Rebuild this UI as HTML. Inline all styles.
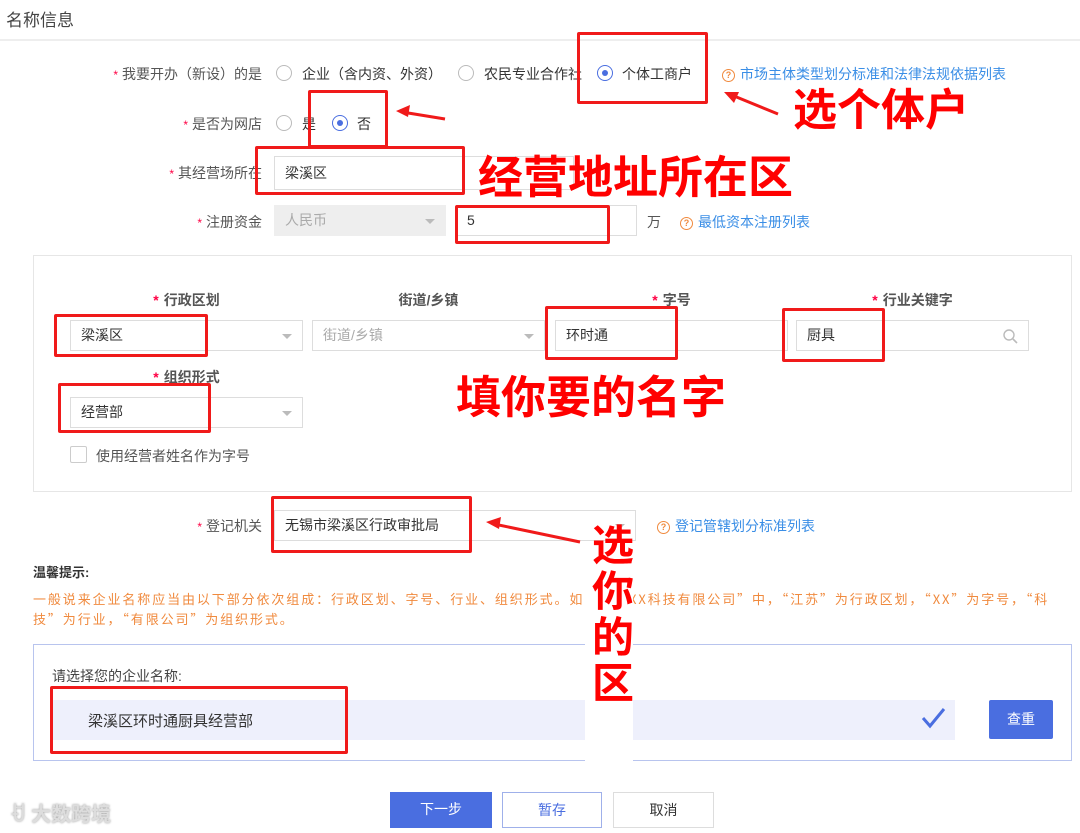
<!DOCTYPE html>
<html><head><meta charset="utf-8"><style>
*{box-sizing:border-box;margin:0;padding:0}
body{width:1080px;height:833px;background:#fff;position:relative;overflow:hidden;font-family:"Liberation Sans","Noto Sans CJK SC",sans-serif;color:#333;font-size:14px}
.a{position:absolute;white-space:nowrap}
.lbl{position:absolute;text-align:right;width:200px;color:#555}
.lbl i{color:#f04;font-style:normal;margin-right:4px;font-size:12px}
.rad{position:absolute;width:16px;height:16px;border:1px solid #bbb;border-radius:50%}
.rad.on{border-color:#4a6ee0}
.rad.on:after{content:"";position:absolute;left:4px;top:4px;width:6px;height:6px;border-radius:50%;background:#4a6ee0}
.inp{position:absolute;border:1px solid #ddd;background:#fff;height:31px;padding:0 10px;line-height:29px;color:#333}
.arr:after{content:"";position:absolute;right:10px;top:13px;border:5px solid transparent;border-top-color:#bbb}
.link{color:#3a8ee6}
.q{display:inline-block;width:13px;height:13px;border:1.5px solid #f08a3e;border-radius:50%;color:#f08a3e;font-size:9px;line-height:10px;text-align:center;margin-right:5px;vertical-align:1px;font-weight:bold}
.red{position:absolute;border:3px solid #f01a1a;border-radius:2px}
.big{position:absolute;color:#f00;font-weight:bold;font-family:"Noto Sans CJK SC",sans-serif;white-space:nowrap}
.hd{position:absolute;color:#555;font-weight:bold;font-size:14px;text-align:center;width:233px}
.hd i{color:#f04;font-style:normal;margin-right:5px}
.btn{position:absolute;height:36px;line-height:34px;text-align:center;font-size:14px}
</style></head><body>
<div class="a" style="left:6px;top:6px;font-size:17px;color:#444">名称信息</div>
<div class="a" style="left:0;top:39px;width:1080px;height:2px;background:#eee"></div>

<div class="lbl" style="left:62px;top:64px"><i>*</i>我要开办（新设）的是</div>
<div class="rad" style="left:276px;top:65px"></div><div class="a" style="left:302px;top:64px">企业（含内资、外资）</div>
<div class="rad" style="left:458px;top:65px"></div><div class="a" style="left:484px;top:64px">农民专业合作社</div>
<div class="rad on" style="left:597px;top:65px"></div><div class="a" style="left:622px;top:64px">个体工商户</div>
<div class="a link" style="left:722px;top:64px"><span class="q">?</span>市场主体类型划分标准和法律法规依据列表</div>

<div class="lbl" style="left:62px;top:114px"><i>*</i>是否为网店</div>
<div class="rad" style="left:276px;top:115px"></div><div class="a" style="left:302px;top:114px">是</div>
<div class="rad on" style="left:332px;top:115px"></div><div class="a" style="left:357px;top:114px">否</div>

<div class="lbl" style="left:62px;top:163px"><i>*</i>其经营场所在</div>
<div class="inp" style="left:274px;top:156px;width:300px;height:34px;line-height:32px">梁溪区</div>

<div class="lbl" style="left:62px;top:212px"><i>*</i>注册资金</div>
<div class="inp arr" style="left:274px;top:205px;width:172px;background:#eee;border-color:#eee;color:#aaa">人民币</div>
<div class="inp" style="left:456px;top:205px;width:181px">5</div>
<div class="a" style="left:647px;top:212px;color:#555">万</div>
<div class="a link" style="left:680px;top:212px"><span class="q">?</span>最低资本注册列表</div>

<div class="a" style="left:33px;top:255px;width:1039px;height:237px;border:1px solid #e6e6e6"></div>
<div class="hd" style="left:70px;top:290px"><i>*</i>行政区划</div>
<div class="hd" style="left:312px;top:290px">街道/乡镇</div>
<div class="hd" style="left:555px;top:290px"><i>*</i>字号</div>
<div class="hd" style="left:796px;top:290px"><i>*</i>行业关键字</div>
<div class="inp arr" style="left:70px;top:320px;width:233px">梁溪区</div>
<div class="inp arr" style="left:312px;top:320px;width:233px;color:#aaa">街道/乡镇</div>
<div class="inp" style="left:555px;top:320px;width:233px">环时通</div>
<div class="inp" style="left:796px;top:320px;width:233px">厨具<svg style="position:absolute;right:10px;top:8px" width="15" height="15" viewBox="0 0 15 15"><circle cx="6" cy="6" r="5" fill="none" stroke="#bbb" stroke-width="1.4"/><path d="M10 10l4 4" stroke="#bbb" stroke-width="1.6"/></svg></div>
<div class="hd" style="left:70px;top:367px"><i>*</i>组织形式</div>
<div class="inp arr" style="left:70px;top:397px;width:233px">经营部</div>
<div class="a" style="left:70px;top:446px;width:17px;height:17px;border:1px solid #ccc;border-radius:2px"></div>
<div class="a" style="left:96px;top:446px;color:#555">使用经营者姓名作为字号</div>

<div class="lbl" style="left:62px;top:516px"><i>*</i>登记机关</div>
<div class="inp arr" style="left:274px;top:510px;width:362px">无锡市梁溪区行政审批局</div>
<div class="a link" style="left:657px;top:516px"><span class="q">?</span>登记管辖划分标准列表</div>

<div class="a" style="left:33px;top:562px;font-weight:bold;font-size:13px;color:#333">温馨提示:</div>
<div class="a" style="left:33px;top:589px;width:1040px;white-space:nowrap;color:#f08a3e;font-size:13px;line-height:20px;font-family:'Noto Sans CJK SC',sans-serif;letter-spacing:1.9px">一般说来企业名称应当由以下部分依次组成：行政区划、字号、行业、组织形式。如“江苏XX科技有限公司”中，“江苏”为行政区划，“XX”为字号，“科<br>技”为行业，“有限公司”为组织形式。</div>

<div class="a" style="left:33px;top:644px;width:1039px;height:117px;border:1px solid #b8c4ee"></div>
<div class="a" style="left:52px;top:666px;color:#444">请选择您的企业名称:</div>
<div class="a" style="left:52px;top:700px;width:903px;height:40px;background:#eef0fc"></div>
<div class="a" style="left:88px;top:710px;font-size:15px">梁溪区环时通厨具经营部</div>
<svg class="a" style="left:920px;top:706px" width="26" height="24" viewBox="0 0 26 24"><path d="M3 12l7 8L24 3" fill="none" stroke="#4a6ee0" stroke-width="3"/></svg>
<div class="btn" style="left:989px;top:700px;width:64px;height:39px;line-height:39px;background:#4a6ee0;color:#fff;border-radius:2px">查重</div>

<div class="btn" style="left:390px;top:792px;width:102px;background:#4a6ee0;color:#fff">下一步</div>
<div class="btn" style="left:502px;top:792px;width:100px;border:1px solid #9fb0ea;color:#4a6ee0">暂存</div>
<div class="btn" style="left:613px;top:792px;width:101px;border:1px solid #ddd;color:#333">取消</div>
<div class="a" style="left:10px;top:798px;font-size:20px;color:#ddd;font-weight:bold;text-shadow:0 0 2px #999">ꀀ 大数跨境</div>

<div class="red" style="left:577px;top:32px;width:131px;height:72px"></div>
<div class="red" style="left:308px;top:90px;width:80px;height:58px"></div>
<div class="red" style="left:255px;top:146px;width:210px;height:49px"></div>
<div class="red" style="left:455px;top:205px;width:155px;height:39px"></div>
<div class="red" style="left:54px;top:314px;width:154px;height:43px"></div>
<div class="red" style="left:545px;top:306px;width:133px;height:54px"></div>
<div class="red" style="left:782px;top:308px;width:103px;height:54px"></div>
<div class="red" style="left:58px;top:383px;width:153px;height:50px"></div>
<div class="red" style="left:271px;top:496px;width:201px;height:57px"></div>
<div class="red" style="left:50px;top:686px;width:298px;height:68px"></div>

<svg class="a" style="left:0;top:0" width="1080" height="833">
<path d="M445 119L402 112" stroke="#f01a1a" stroke-width="3"/><path d="M396 111l14-6-2 12z" fill="#f01a1a"/>
<path d="M778 114L734 96" stroke="#f01a1a" stroke-width="3"/><path d="M724 92l15 0-5 11z" fill="#f01a1a"/>
<path d="M580 542L494 524" stroke="#f01a1a" stroke-width="3"/><path d="M486 522l15-5-2 12z" fill="#f01a1a"/>
</svg>
<div class="big" style="left:793px;top:79px;font-size:44px;line-height:54px">选个体户</div>
<div class="big" style="left:478px;top:146px;font-size:45px;line-height:56px">经营地址所在区</div>
<div class="big" style="left:456px;top:366px;font-size:45px;line-height:56px">填你要的名字</div>
<div class="a" style="left:585px;top:560px;width:48px;height:210px;background:#fff"></div>
<div class="big" style="left:592px;top:520px;width:44px;font-size:42px;line-height:46px;white-space:normal">选你的区</div>
</body></html>
